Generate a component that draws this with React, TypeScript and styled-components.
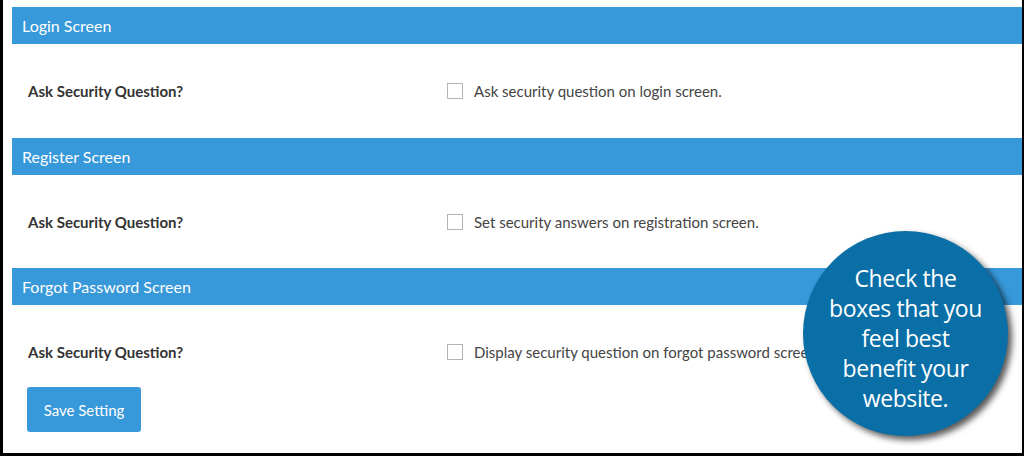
import React from "react";
import styled, { createGlobalStyle } from "styled-components";

const GlobalStyle = createGlobalStyle`
    html, body {
        margin: 0;
        padding: 0;
        background: #fff;
    }
    * {
        box-sizing: border-box;
    }
`;

const Frame = styled.div`
    position: relative;
    width: 1024px;
    height: 456px;
    overflow: hidden;
    background: #fff;
    border-left: 3px solid #000;
    border-right: 2px solid #000;
    border-bottom: 3px solid #000;
    padding: 7px 0 0 9px;
    font-family: Lato, "Open Sans", sans-serif;
`;

const SectionHeader = styled.div`
    height: 37px;
    display: flex;
    align-items: center;
    padding-left: 10px;
    background: #3798da;
    color: #fff;
    font-size: 16px;
`;

const Row = styled.div<{ $bottom?: number }>`
    display: grid;
    grid-template-columns: 435px 1fr;
    align-items: center;
    height: 22px;
    margin: 36px 0 ${(p) => (p.$bottom ?? 35)}px;
`;

const FieldLabel = styled.div`
    padding-left: 16px;
    font-size: 15px;
    font-weight: bold;
    color: #333;
`;

const CheckLabel = styled.label`
    display: flex;
    align-items: center;
    gap: 11px;
    font-size: 15px;
    color: #444;
    white-space: nowrap;
`;

const Box = styled.span`
    width: 16px;
    height: 16px;
    border: 1px solid #b4b4b4;
    background: #fff;
    flex-shrink: 0;
`;

const SaveButton = styled.button`
    margin-left: 15px;
    width: 114px;
    height: 45px;
    border: none;
    border-radius: 3px;
    background: #3798da;
    color: #fff;
    font-family: Lato, sans-serif;
    font-size: 15px;
    cursor: pointer;
`;

const Bubble = styled.div`
    position: absolute;
    left: 800px;
    top: 231px;
    width: 205px;
    height: 205px;
    padding-top: 8px;
    border-radius: 50%;
    background: #0a6fa7;
    box-shadow: 4px 4px 6px rgba(0, 0, 0, 0.65);
    display: flex;
    align-items: center;
    justify-content: center;
    text-align: center;
    color: #fff;
    font-family: "Open Sans", sans-serif;
    font-size: 23px;
    line-height: 30px;
    letter-spacing: -0.4px;
`;

const sections = [
    { title: "Login Screen", text: "Ask security question on login screen." },
    { title: "Register Screen", text: "Set security answers on registration screen." },
    { title: "Forgot Password Screen", text: "Display security question on forgot password screen." },
];

const App = (): JSX.Element => {
    return (
        <Frame>
            <GlobalStyle />
            {sections.map((s, i) => (
                <div key={s.title}>
                    <SectionHeader>{s.title}</SectionHeader>
                    <Row $bottom={i === 0 ? 36 : i === sections.length - 1 ? 24 : 35}>
                        <FieldLabel>Ask Security Question?</FieldLabel>
                        <CheckLabel>
                            <Box />
                            {s.text}
                        </CheckLabel>
                    </Row>
                </div>
            ))}
            <SaveButton>Save Setting</SaveButton>
            <Bubble>
                Check the
                <br />
                boxes that you
                <br />
                feel best
                <br />
                benefit your
                <br />
                website.
            </Bubble>
        </Frame>
    );
};

export default App;
